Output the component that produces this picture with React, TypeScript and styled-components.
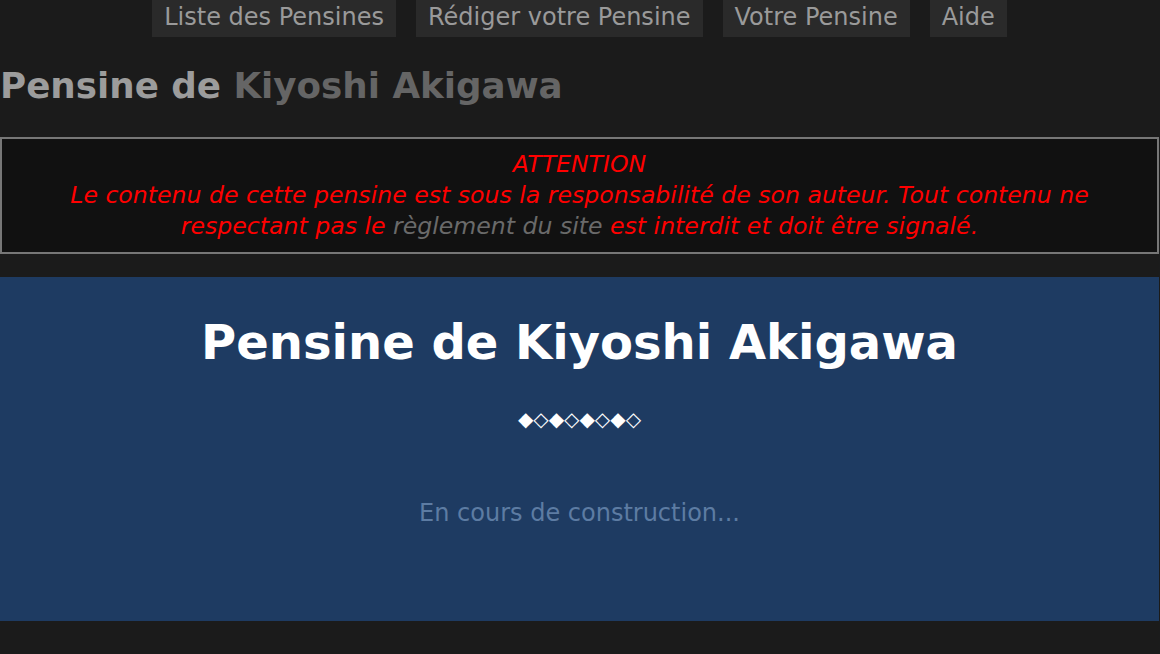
import React from 'react'
import styled, { createGlobalStyle } from 'styled-components'

const GlobalStyle = createGlobalStyle`
    html, body {
        margin: 0;
        padding: 0;
        background-color: #1b1b1b;
    }
    body {
        font-family: "DejaVu Sans", Verdana, sans-serif;
    }
`

const Page = styled.div`
    width: 1159px;
    min-height: 654px;
    display: flex;
    flex-direction: column;
`

const Nav = styled.nav`
    display: flex;
    justify-content: center;
    gap: 20px;
`

const NavItem = styled.a`
    display: block;
    height: 37px;
    line-height: 34px;
    padding: 0 12px;
    background-color: #2a2a2a;
    color: #9a9a9a;
    font-size: 24px;
    text-decoration: none;
`

const Header = styled.h1`
    margin: 24px 0 0;
    font-size: 35.7px;
    line-height: 50px;
    font-weight: bold;
    color: #9c9c9c;
`

const Name = styled.span`
    color: #656565;
`

const Warning = styled.div`
    margin-top: 26px;
    border: 2px solid #777;
    background-color: #111;
    padding: 10px 20px 10px;
    color: #ff0000;
    font-style: italic;
    font-size: 23.6px;
    line-height: 31px;
    text-align: center;
`

const Muted = styled.a`
    color: #6a6a6a;
    text-decoration: none;
`

const Panel = styled.section`
    margin-top: 23px;
    height: 344px;
    background-color: #1e3b62;
    display: flex;
    flex-direction: column;
    align-items: center;
`

const Title = styled.h2`
    margin: 35px 0 0;
    font-size: 48px;
    line-height: 60px;
    font-weight: bold;
    color: #fff;
`

const Ornament = styled.div`
    margin-top: 35px;
    color: #fff;
    font-size: 20px;
`

const Placeholder = styled.p`
    margin: 68px 0 0;
    color: #5d7ca3;
    font-size: 24px;
`

const links = ['Liste des Pensines', 'Rédiger votre Pensine', 'Votre Pensine', 'Aide']

const App = () => {
    return (
        <Page>
            <GlobalStyle />
            <Nav>
                {links.map(l => <NavItem key={l}>{l}</NavItem>)}
            </Nav>
            <Header>Pensine de <Name>Kiyoshi Akigawa</Name></Header>
            <Warning>
                ATTENTION<br />
                Le contenu de cette pensine est sous la responsabilité de son auteur. Tout contenu ne
                respectant pas le <Muted>règlement du site</Muted> est interdit et doit être signalé.
            </Warning>
            <Panel>
                <Title>Pensine de Kiyoshi Akigawa</Title>
                <Ornament>◆◇◆◇◆◇◆◇</Ornament>
                <Placeholder>En cours de construction...</Placeholder>
            </Panel>
        </Page>
    )
}

export default App
